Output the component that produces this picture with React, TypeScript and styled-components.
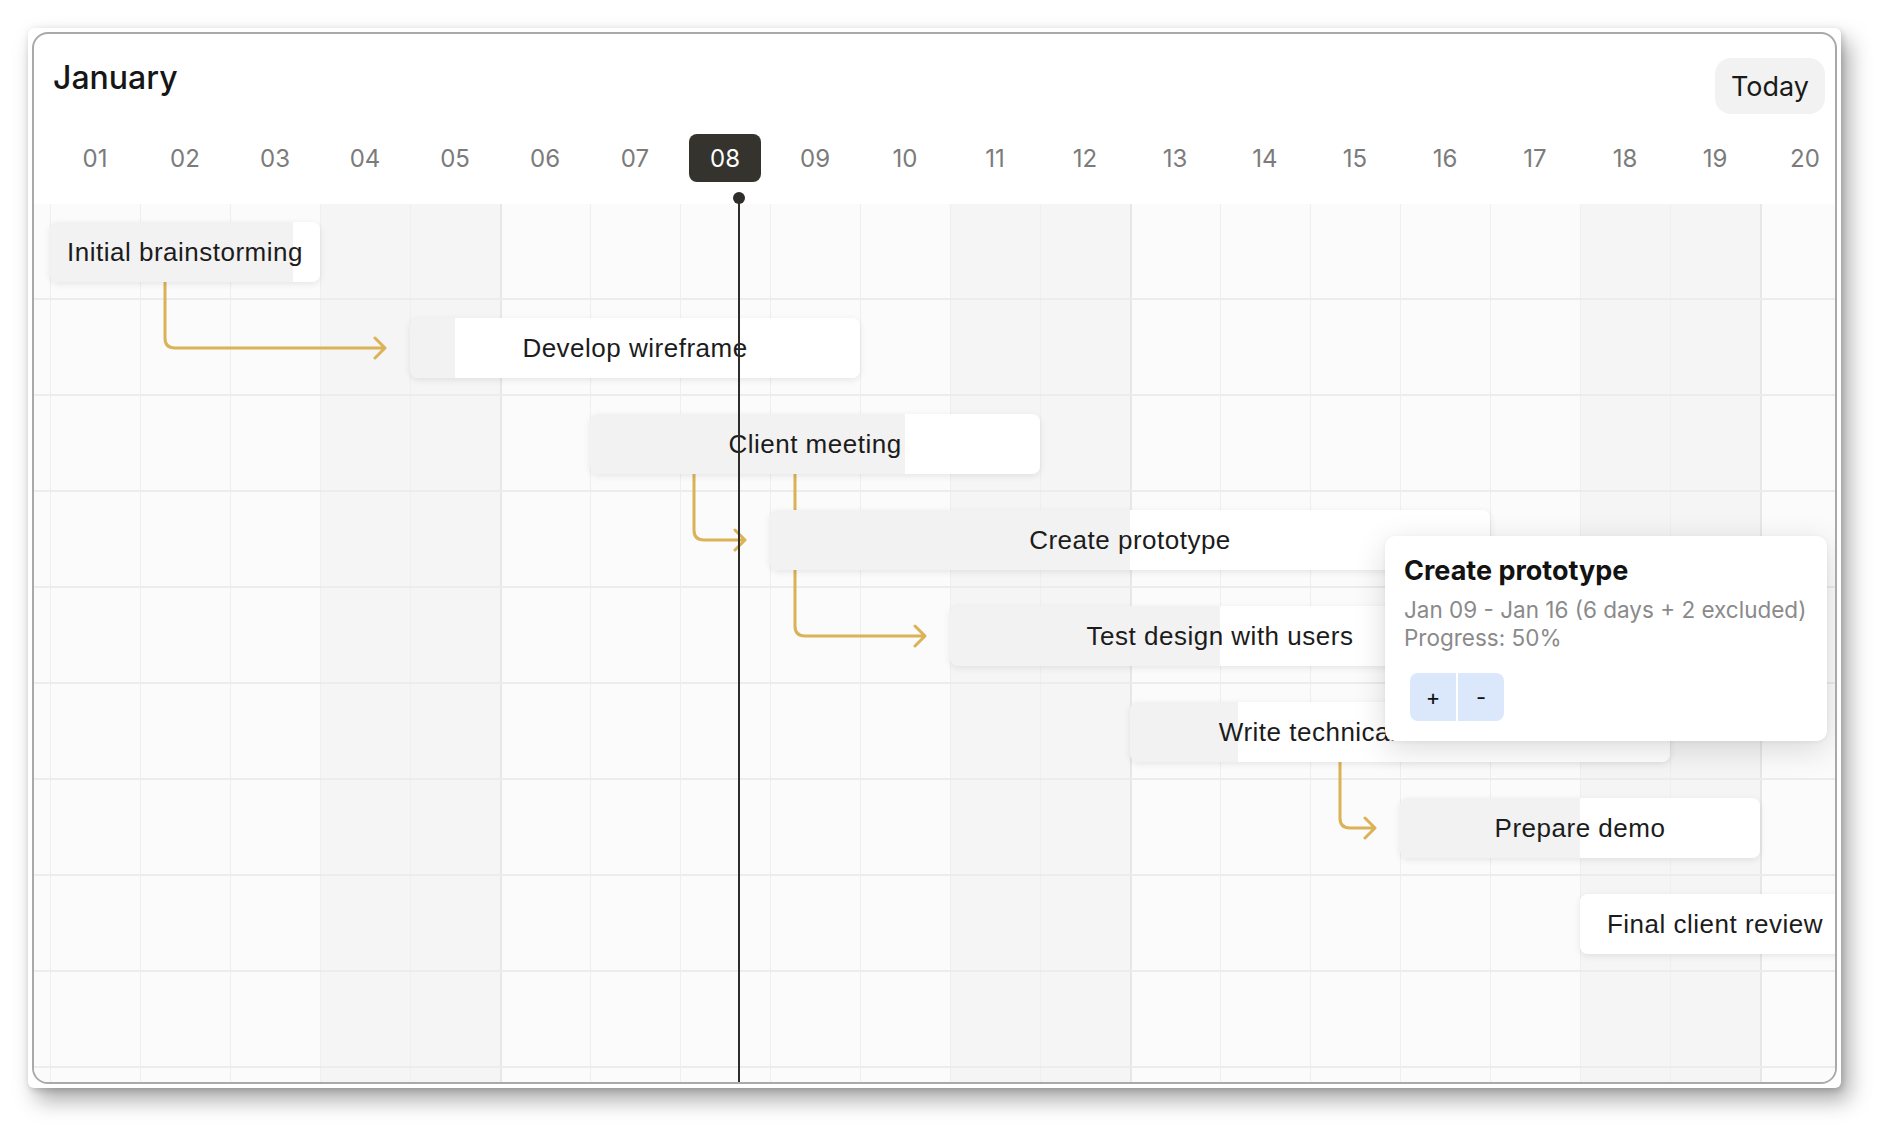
import React from 'react';
import styled, { createGlobalStyle } from 'styled-components';

const DAY_WIDTH = 90;
const ROW_HEIGHT = 96;
const GRID_LEFT = 16;
const TODAY = 8;
const TODAY_POS = 7.65; // days since Jan 01, 00:00
const DAYS = Array.from({ length: 20 }, (_, i) => i + 1);

interface Task {
  id: number;
  name: string;
  start: number;
  days: number;
  progress: number;
}

const tasks: Task[] = [
  { id: 1, name: 'Initial brainstorming', start: 1, days: 3, progress: 90 },
  { id: 2, name: 'Develop wireframe', start: 5, days: 5, progress: 10 },
  { id: 3, name: 'Client meeting', start: 7, days: 5, progress: 70 },
  { id: 4, name: 'Create prototype', start: 9, days: 8, progress: 50 },
  { id: 5, name: 'Test design with users', start: 11, days: 6, progress: 50 },
  { id: 6, name: 'Write technical documentation', start: 13, days: 6, progress: 20 },
  { id: 7, name: 'Prepare demo', start: 16, days: 4, progress: 50 },
  { id: 8, name: 'Final client review', start: 18, days: 3, progress: 0 },
];

// dependency links, in body coordinates
const links = [
  { x: 131, y1: 78, y2: 144, tip: 351 },
  { x: 660, y1: 270, y2: 336, tip: 711 },
  { x: 761, y1: 270, y2: 432, tip: 891 },
  { x: 1306, y1: 558, y2: 624, tip: 1341 },
];

const isWeekend = (d: number) => d % 7 === 4 || d % 7 === 5;
const isMonday = (d: number) => d % 7 === 6;

const GlobalStyle = createGlobalStyle`
  html, body {
    margin: 0;
    padding: 0;
    background: #ffffff;
  }
  body {
    min-height: 100vh;
    font-family: 'Inter', 'Liberation Sans', sans-serif;
    color: #1a1a1a;
  }
  #root {
    min-height: 100vh;
    padding: 28px 0 0 28px;
  }
  * {
    box-sizing: border-box;
  }
`;

const Frame = styled.div`
  width: 1813px;
  padding: 4px;
  background: #ffffff;
  border-radius: 6px;
  box-shadow: 8px 12px 22px rgba(0, 0, 0, 0.34), 2px 3px 6px rgba(0, 0, 0, 0.12),
    0 0 8px rgba(0, 0, 0, 0.05);
`;

const Card = styled.div`
  position: relative;
  height: 1052px;
  border: 2px solid #a9a9a9;
  border-radius: 16px;
  background: #ffffff;
  overflow: hidden;
  display: flex;
  flex-direction: column;
`;

const Header = styled.div`
  display: flex;
  justify-content: space-between;
  align-items: flex-start;
  padding: 24px 10px 0 19px;
`;

const Month = styled.h1`
  margin: 4px 0 0 0;
  font-size: 32px;
  line-height: 32px;
  font-weight: 500;
  color: #161616;
`;

const TodayButton = styled.button`
  height: 56px;
  padding: 0 16px;
  border: none;
  border-radius: 16px;
  background: #f2f2f2;
  font-family: 'Inter', sans-serif;
  font-size: 27px;
  color: #1a1a1a;
  cursor: pointer;
`;

const DayRow = styled.div`
  display: grid;
  grid-template-columns: repeat(20, ${DAY_WIDTH}px);
  padding-left: ${GRID_LEFT}px;
  margin-top: 20px;
  height: 48px;
`;

const DayCell = styled.div`
  display: flex;
  align-items: center;
  justify-content: center;
`;

const DayLabel = styled.span<{ $active?: boolean }>`
  width: 72px;
  height: 48px;
  display: flex;
  align-items: center;
  justify-content: center;
  border-radius: 8px;
  font-size: 24px;
  background: ${p => (p.$active ? '#35332e' : 'transparent')};
  color: ${p => (p.$active ? '#ffffff' : '#7b7b7b')};
`;

const Body = styled.div`
  position: relative;
  isolation: isolate;
  flex: 1;
  margin-top: 22px;
  background: #fbfbfb;
`;

const ColumnLayer = styled.div`
  position: absolute;
  inset: 0;
  z-index: -1;
  display: grid;
  grid-template-columns: repeat(20, ${DAY_WIDTH}px);
  padding-left: ${GRID_LEFT}px;
`;

const Column = styled.div<{ $weekend: boolean; $weekStart: boolean }>`
  background: ${p => (p.$weekend ? '#f5f5f5' : 'transparent')};
  border-left: ${p => (p.$weekStart ? '2px solid #e7e7e7' : '1px solid #efefef')};
`;

const TaskRow = styled.div`
  height: ${ROW_HEIGHT}px;
  padding-top: 18px;
  border-bottom: 2px solid #eaedf0;
`;

const Bar = styled.div<{ $progress: number }>`
  position: relative;
  z-index: 2;
  height: 60px;
  border-radius: 8px;
  background: linear-gradient(
    to right,
    #f2f2f2 0%,
    #f2f2f2 ${p => p.$progress}%,
    #ffffff ${p => p.$progress}%
  );
  box-shadow: 0 2px 7px rgba(0, 0, 0, 0.09);
  display: flex;
  align-items: center;
  justify-content: center;
`;

const BarLabel = styled.span`
  font-family: 'Liberation Sans', Arial, sans-serif;
  font-size: 26px;
  letter-spacing: 0.5px;
  color: #1c1c1c;
  white-space: nowrap;
`;

const Links = styled.svg`
  position: absolute;
  left: 0;
  top: 0;
  z-index: 1;
  overflow: visible;
  pointer-events: none;
`;

const TodayMarker = styled.div`
  position: absolute;
  top: -12px;
  bottom: 0;
  width: 12px;
  z-index: 3;
  display: flex;
  flex-direction: column;
  align-items: center;
`;

const TodayDot = styled.div`
  width: 12px;
  height: 12px;
  border-radius: 50%;
  background: #2f2d29;
  flex-shrink: 0;
`;

const TodayLine = styled.div`
  width: 2px;
  flex: 1;
  margin-top: -6px;
  background: #2f2d29;
`;

const Tooltip = styled.div`
  position: absolute;
  left: 1351px;
  top: 502px;
  width: 442px;
  padding: 19px 20px 20px 19px;
  border-radius: 10px;
  background: #ffffff;
  box-shadow: 0 8px 32px rgba(0, 0, 0, 0.14), 0 1px 4px rgba(0, 0, 0, 0.05);
  z-index: 5;
`;

const TooltipTitle = styled.div`
  font-size: 27px;
  line-height: 31px;
  font-weight: 700;
  color: #121212;
`;

const TooltipText = styled.div`
  margin-top: 10px;
  font-size: 22.5px;
  line-height: 28px;
  color: #8a8a8a;
`;

const ButtonGroup = styled.div`
  display: flex;
  gap: 2px;
  margin: 21px 0 0 6px;
`;

const StepButton = styled.button<{ $side: 'left' | 'right' }>`
  width: 46px;
  height: 48px;
  border: none;
  background: #dbe8fb;
  font-family: 'Inter', sans-serif;
  font-size: 22px;
  color: #111111;
  border-radius: ${p => (p.$side === 'left' ? '8px 0 0 8px' : '0 8px 8px 0')};
  cursor: pointer;
`;

const linkPath = (l: { x: number; y1: number; y2: number; tip: number }) => {
  const r = 10;
  return `M ${l.x} ${l.y1} V ${l.y2 - r} Q ${l.x} ${l.y2} ${l.x + r} ${l.y2} H ${l.tip} M ${l.tip - 10} ${l.y2 - 10} L ${l.tip} ${l.y2} L ${l.tip - 10} ${l.y2 + 10}`;
};

export default function App() {
  const rows = [...tasks, null, null];

  return (
    <>
      <GlobalStyle />
      <Frame>
        <Card>
          <Header>
            <Month>January</Month>
            <TodayButton>Today</TodayButton>
          </Header>

          <DayRow>
            {DAYS.map(d => (
              <DayCell key={d}>
                <DayLabel $active={d === TODAY}>{String(d).padStart(2, '0')}</DayLabel>
              </DayCell>
            ))}
          </DayRow>

          <Body>
            <ColumnLayer>
              {DAYS.map(d => (
                <Column key={d} $weekend={isWeekend(d)} $weekStart={isMonday(d)} />
              ))}
            </ColumnLayer>

            <Links width="1816" height="1000">
              {links.map((l, i) => (
                <path
                  key={i}
                  d={linkPath(l)}
                  fill="none"
                  stroke="#dcb257"
                  strokeWidth={3}
                  strokeLinecap="round"
                  strokeLinejoin="round"
                />
              ))}
            </Links>

            {rows.map((task, i) => (
              <TaskRow key={task ? task.id : `empty-${i}`}>
                {task && (
                  <Bar
                    $progress={task.progress}
                    style={{
                      marginLeft: GRID_LEFT + (task.start - 1) * DAY_WIDTH,
                      width: task.days * DAY_WIDTH,
                    }}
                  >
                    <BarLabel>{task.name}</BarLabel>
                  </Bar>
                )}
              </TaskRow>
            ))}

            <TodayMarker style={{ left: GRID_LEFT + TODAY_POS * DAY_WIDTH - 6 }}>
              <TodayDot />
              <TodayLine />
            </TodayMarker>
          </Body>

          <Tooltip>
            <TooltipTitle>Create prototype</TooltipTitle>
            <TooltipText>
              Jan 09 - Jan 16 (6 days + 2 excluded)
              <br />
              Progress: 50%
            </TooltipText>
            <ButtonGroup>
              <StepButton $side="left">+</StepButton>
              <StepButton $side="right">-</StepButton>
            </ButtonGroup>
          </Tooltip>
        </Card>
      </Frame>
    </>
  );
}
